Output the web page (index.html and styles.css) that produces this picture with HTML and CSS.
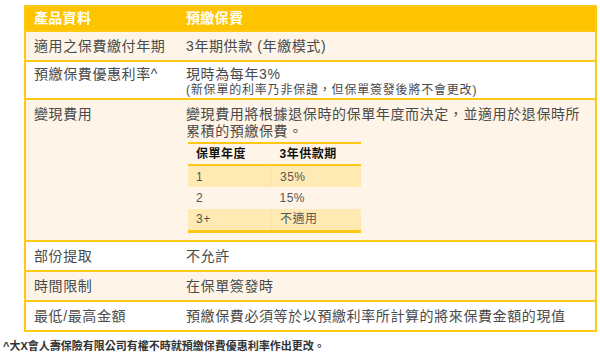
FILE: index.html
```html
<!DOCTYPE html>
<html lang="zh-Hant">
<head>
<meta charset="utf-8">
<link rel="stylesheet" href="styles.css">
</head>
<body>
<div class="wrap">
  <table class="info">
    <thead>
      <tr><th class="c1">產品資料</th><th>預繳保費</th></tr>
    </thead>
    <tbody>
      <tr class="alt"><td class="c1">適用之保費繳付年期</td><td>3年期供款 (年繳模式)</td></tr>
      <tr class="two"><td class="c1">預繳保費優惠利率^</td><td>現時為每年3%<div class="small">(新保單的利率乃非保證，但保單簽發後將不會更改)</div></td></tr>
      <tr class="alt"><td class="c1">變現費用</td><td>變現費用將根據退保時的保單年度而決定，並適用於退保時所累積的預繳保費。
        <table class="inner">
          <thead><tr><th>保單年度</th><th>3年供款期</th></tr></thead>
          <tbody>
            <tr class="hl"><td>1</td><td>35%</td></tr>
            <tr><td>2</td><td>15%</td></tr>
            <tr class="hl"><td>3+</td><td>不適用</td></tr>
          </tbody>
        </table>
      </td></tr>
      <tr><td class="c1">部份提取</td><td>不允許</td></tr>
      <tr class="alt"><td class="c1">時間限制</td><td>在保單簽發時</td></tr>
      <tr><td class="c1">最低/最高金額</td><td>預繳保費必須等於以預繳利率所計算的將來保費金額的現值</td></tr>
    </tbody>
  </table>
</div>
<p class="note">^大X會人壽保險有限公司有權不時就預繳保費優惠利率作出更改。</p>
</body>
</html>
```
FILE: styles.css
```css
html, body { margin: 0; padding: 0; background: #fff; }
body {
  font-family: "Liberation Sans", "Noto Sans CJK TC", sans-serif;
  color: #4a4a4a;
}
.wrap { padding: 5px 3px 0 24px; }
.info {
  width: 573px;
  border-collapse: collapse;
  border: 2px solid #ffc814;
  font-size: 14px;
  line-height: 17px;
  letter-spacing: 0.6px;
}
.info > thead > tr { height: 25px; }
.info > thead th {
  background: #ffc400;
  color: #fff;
  font-weight: bold;
  text-align: left;
  padding: 2px 8px 2px 8px;
  letter-spacing: 0.3px;
}
.info > tbody > tr { height: 30px; }
.info > tbody > tr > td {
  vertical-align: top;
  text-align: left;
  padding: 6px 8px 4px 8px;
  border-top: 2px solid #ffc814;
}
.info > tbody > tr.two > td { padding-top: 4px; padding-bottom: 0; }
.info .c1 { width: 136px; }
.info > tbody > tr.alt > td { background: #fef5e8; }
.small { font-size: 12px; line-height: 15px; letter-spacing: 0.8px; }
.inner {
  margin: 2px 0 3px 2px;
  border-collapse: collapse;
  width: 173px;
  font-size: 12px;
  line-height: 14px;
  letter-spacing: 0.5px;
  border-top: 2px solid #ffc814;
  border-bottom: 3px solid #ffc814;
}
.inner tr { height: 22px; }
.inner th {
  text-align: left;
  color: #111;
  font-weight: bold;
  padding: 2px 8px 2px 8px;
  border-bottom: 2px solid #ffc814;
}
.inner td {
  padding: 2px 8px 2px 8px;
  color: #555;
}
.inner th:first-child, .inner td:first-child { width: 67px; }
.inner tr.hl td { background: #ffeab4; }
.inner tr.hl td:first-child { border-right: 1px solid #ffe3a0; }
.note {
  margin: 5px 0 0 3px;
  font-size: 11px;
  font-weight: bold;
  color: #333;
  letter-spacing: 0;
}
```
